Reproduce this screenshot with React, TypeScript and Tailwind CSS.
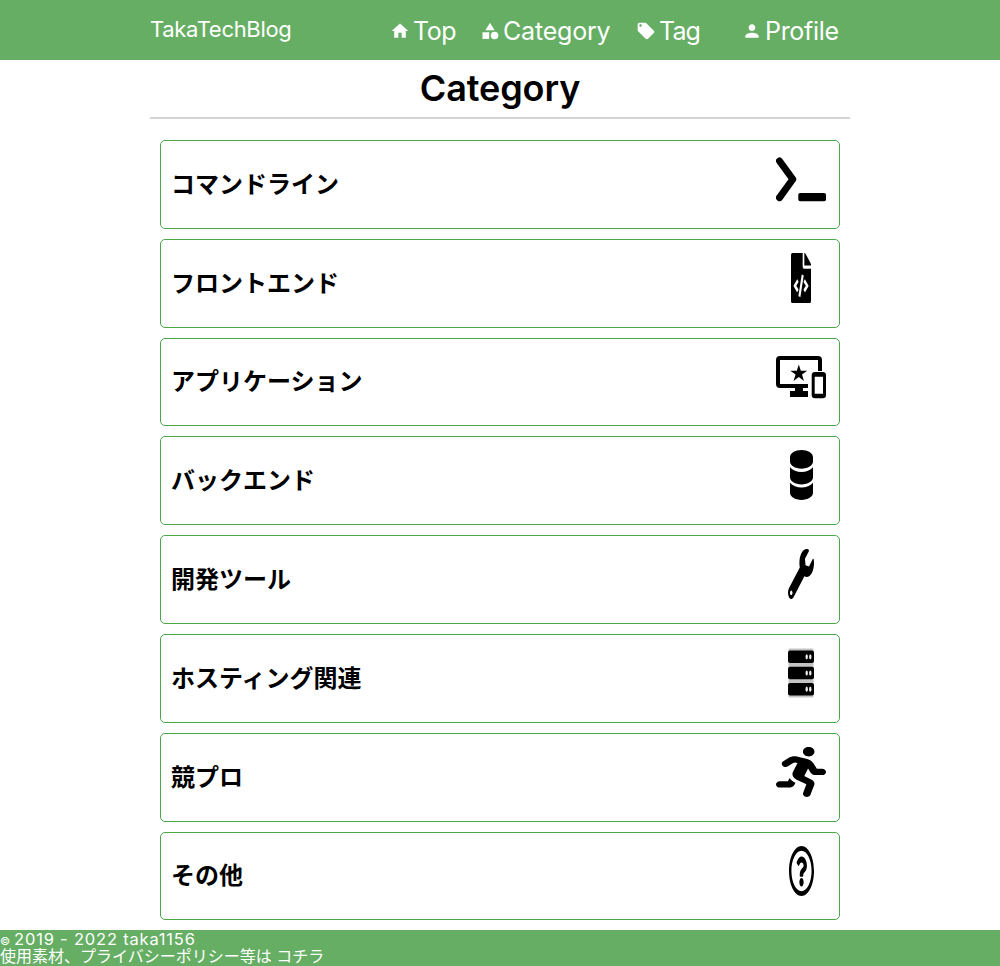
import type { ComponentType, ReactNode, SVGProps } from "react";
import { MdCategory, MdHome, MdLocalOffer, MdPerson } from "react-icons/md";
import { FaDatabase, FaFileCode, FaRegQuestionCircle, FaRunning, FaWrench } from "react-icons/fa";

type NavItem = { label: string; icon: ComponentType<{ className?: string }>; tracking: string };

const navItems: NavItem[] = [
  { label: "Top", icon: MdHome, tracking: "tracking-[-0.4px]" },
  { label: "Category", icon: MdCategory, tracking: "tracking-[-0.2px]" },
  { label: "Tag", icon: MdLocalOffer, tracking: "tracking-[-0.9px]" },
  { label: "Profile", icon: MdPerson, tracking: "tracking-[-0.3px]" },
];

function PromptIcon(props: SVGProps<SVGSVGElement>) {
  return (
    <svg viewBox="0 0 50 50" {...props}>
      <path d="M3.5 7 16.8 25.3 3.5 43.6" fill="none" stroke="currentColor" strokeWidth="7" strokeLinecap="round" strokeLinejoin="round" />
      <rect x="22.3" y="39" width="27.7" height="8.2" rx="1.8" fill="currentColor" />
    </svg>
  );
}

function DevicesIcon(props: SVGProps<SVGSVGElement>) {
  return (
    <svg viewBox="0 0 50 50" fill="none" stroke="currentColor" strokeWidth="4" {...props}>
      <path d="M44 19V8a2 2 0 0 0-2-2H4a2 2 0 0 0-2 2v24a2 2 0 0 0 2 2h28" />
      <rect x="37.2" y="21.5" width="11.3" height="23.3" rx="1.8" strokeWidth="3" />
      <path d="M37 23.2h12M37 43.2h12" strokeWidth="3" />
      <path d="M19 34h8v5h5v6H14v-6h5z" fill="currentColor" stroke="none" />
      <path d="m22.8 12.4 2 6.3h6.4L26 22.5l2 6.5-5.2-3.9-5.3 3.9 2.1-6.5-5.3-3.8h6.5z" fill="currentColor" stroke="none" />
    </svg>
  );
}

function RackIcon(props: SVGProps<SVGSVGElement>) {
  return (
    <svg viewBox="0 0 26 50" {...props}>
      <rect x="0.5" y="0.6" width="25" height="49" rx="1" fill="#c4c4c4" />
      {[2.6, 18.8, 35].map((y) => (
        <g key={y}>
          <rect x="0" y={y} width="26" height="12.4" rx="2" fill="currentColor" />
          <ellipse cx="18.7" cy={y + 6.2} rx="1.2" ry="2.6" fill="#eee" />
          <ellipse cx="22.3" cy={y + 6.2} rx="1.2" ry="2.6" fill="#eee" />
        </g>
      ))}
    </svg>
  );
}

const categories: { label: string; icon: ReactNode }[] = [
  { label: "コマンドライン", icon: <PromptIcon className="h-[50px] w-[50px]" /> },
  { label: "フロントエンド", icon: <FaFileCode viewBox="0 0 384 512" preserveAspectRatio="none" className="h-[50px] w-5" /> },
  { label: "アプリケーション", icon: <DevicesIcon className="h-[50px] w-[50px]" /> },
  { label: "バックエンド", icon: <FaDatabase viewBox="0 0 448 512" preserveAspectRatio="none" className="h-[50px] w-[23px]" /> },
  { label: "開発ツール", icon: <FaWrench viewBox="0 0 512 512" preserveAspectRatio="none" className="h-[50px] w-[26px]" /> },
  { label: "ホスティング関連", icon: <RackIcon className="h-[50px] w-[26px]" /> },
  { label: "競プロ", icon: <FaRunning viewBox="0 0 416 512" preserveAspectRatio="none" className="h-[50px] w-[50px]" /> },
  { label: "その他", icon: <FaRegQuestionCircle viewBox="8 8 496 496" preserveAspectRatio="none" className="h-[50px] w-[25px]" /> },
];

export default function App() {
  return (
    <div className="flex h-[966px] flex-col bg-white font-['Inter','Noto_Sans_CJK_JP',sans-serif] text-black">
      <header className="h-[60px] shrink-0 bg-[#66ae64] text-white">
        <div className="mx-auto flex h-full w-[700px]">
          <a className="w-60 pt-[14px] text-[22px] leading-[30px] tracking-[-0.3px]">TakaTechBlog</a>
          <nav className="grid grid-cols-[90px_156px_106px_108px] pt-[15px]">
            {navItems.map(({ label, icon: Icon, tracking }) => (
              <a key={label} className="flex">
                <Icon className="mt-1.5 mr-[3px] size-5 shrink-0" />
                <span className={`text-[25px] leading-8 whitespace-nowrap ${tracking}`}>{label}</span>
              </a>
            ))}
          </nav>
        </div>
      </header>
      <main className="mx-auto w-[700px] flex-1">
        <h1 className="h-[59px] border-b-2 border-[#d3d3d3] pt-1 text-center text-[36px] leading-[48px] font-semibold tracking-[-0.1px]">Category</h1>
        <ul className="mt-[21px] flex flex-col gap-2.5 px-2.5">
          {categories.map(({ label, icon }) => (
            <li key={label} className="flex h-[88.8px] justify-between rounded-[5px] border border-[#4ca64c] pr-[13px] pl-2.5">
              <h2 className="pt-[25.9px] text-2xl leading-9 font-bold">{label}</h2>
              <span className="mt-[13px] flex h-[50px] w-[50px] justify-center">{icon}</span>
            </li>
          ))}
        </ul>
      </main>
      <footer className="h-9 shrink-0 bg-[#66ae64] text-base leading-[18px] text-white">
        <p className="h-[18px] text-[16.5px] tracking-[0.8px]"><span className="mr-1 text-[11px] tracking-normal">©</span>2019 - 2022 taka1156</p>
        <p className="h-[18px] leading-[17px]">使用素材、プライバシーポリシー等は コチラ</p>
      </footer>
    </div>
  );
}
